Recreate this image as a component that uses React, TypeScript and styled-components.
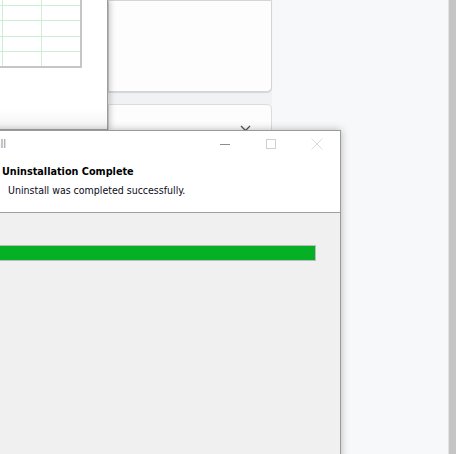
import React from "react";
import styled, { createGlobalStyle } from "styled-components";

const GlobalStyle = createGlobalStyle`
  html, body {
    margin: 0;
    padding: 0;
    overflow: hidden;
    background: #f7f8fa;
  }
`;

// desktop behind the dialog
const Desktop = styled.div`
  position: relative;
  display: grid;
  grid-template-columns: 108px 164px 1fr 8px;
  width: 456px;
  height: 454px;
  overflow: hidden;
  background: #f7f8fa;
  font-family: "DejaVu Sans Condensed", "Liberation Sans", sans-serif;
`;

const SheetWindow = styled.div`
  position: relative;
  z-index: 1;
  height: 130px;
  background: linear-gradient(#ffffff 85%, #f2f2f2);
  border-right: 1px solid #9c9c9c;
  border-bottom: 1px solid #a8a8a8;
  box-sizing: border-box;
  box-shadow: 2px 0 6px rgba(0, 0, 0, 0.22);
`;

const Sheet = styled.div`
  display: grid;
  grid-template-columns: 2px 38px 38px;
  grid-template-rows: 5px 14px 15px 14px 14px;
  gap: 1px;
  width: 79px;
  padding-right: 1px;
  background: #cdeed5;
  border-right: 2px solid #c6c6c6;
  border-bottom: 2px solid #c6c6c6;
`;

const Cell = styled.div`
  background: #ffffff;
`;

const Column = styled.div`
  display: flex;
  flex-direction: column;
  gap: 12px;
  background: #f1f2f4;
`;

const Card = styled.div<{ $h: number }>`
  height: ${(p) => p.$h}px;
  flex-shrink: 0;
  box-sizing: border-box;
  display: flex;
  justify-content: flex-end;
  padding: 20px 20px 0 0;
  background: #fdfdfe;
  border: 1px solid #d4d4d6;
  border-radius: 0 0 5px 0;
  box-shadow: 0 1px 1px rgba(0, 0, 0, 0.12);
`;

const LowerCard = styled(Card)`
  border-radius: 0 5px 0 0;
  box-shadow: none;
  border-color: #dcdcde;
`;

const Scrollbar = styled.div`
  background: #c5c5c5;
  border-left: 1px solid #e2e2e2;
`;

// the uninstaller window
const Dialog = styled.div`
  position: absolute;
  top: 130px;
  left: -20px;
  z-index: 2;
  width: 361px;
  height: 340px;
  box-sizing: border-box;
  display: flex;
  flex-direction: column;
  background: #f0f0f0;
  border: 1px solid #9a9a9a;
  box-shadow: 0 0 8px rgba(0, 0, 0, 0.28);
  font-family: "DejaVu Sans Condensed", "Liberation Sans", sans-serif;
`;

const TitleBar = styled.div`
  display: flex;
  align-items: center;
  height: 25px;
  background: #ffffff;
`;

const TitleText = styled.span`
  margin-left: -21px;
  font-family: Lato, "Liberation Sans", sans-serif;
  font-size: 12px;
  color: #9c9ca6;
`;

const Caption = styled.div`
  display: flex;
  margin-left: auto;
  height: 100%;
`;

const CaptionButton = styled.div`
  width: 46px;
  display: flex;
  align-items: center;
  justify-content: center;
`;

const Header = styled.div`
  display: flex;
  flex-direction: column;
  height: 57px;
  box-sizing: border-box;
  padding: 8px 0 0 21px;
  background: #ffffff;
  border-bottom: 1px solid #a0a0a0;
`;

const HeaderTitle = styled.div`
  font-size: 10.75px;
  font-weight: 700;
  line-height: 15px;
  color: #000000;
`;

const HeaderSub = styled.div`
  margin: 4px 0 0 6px;
  font-size: 10.5px;
  line-height: 15px;
  color: #0a0a20;
`;

const Body = styled.div`
  flex: 1;
  padding: 32px 24px 0 10px;
`;

const Progress = styled.div`
  height: 16px;
  box-sizing: border-box;
  border: 1px solid #bcbcbc;
  background: #e6e6e6;
`;

const ProgressFill = styled.div`
  height: 100%;
  background: #06b025;
`;

export default function App() {
  const cells = Array.from({ length: 15 });
  const progress = 100;
  return (
    <Desktop>
      <GlobalStyle />
      <SheetWindow>
        <Sheet>
          {cells.map((_, i) => (
            <Cell key={i} />
          ))}
        </Sheet>
      </SheetWindow>
      <Column>
        <Card $h={92} />
        <LowerCard $h={400}>
          <svg width="11" height="7" viewBox="0 0 11 7">
            <path d="M1 1l4.5 4.5L10 1" fill="none" stroke="#555" strokeWidth="1.3" />
          </svg>
        </LowerCard>
      </Column>
      <div />
      <Scrollbar />

      <Dialog>
        <TitleBar>
          <TitleText>Uninstall</TitleText>
          <Caption>
            <CaptionButton>
              <svg width="10" height="10" viewBox="0 0 10 10">
                <path d="M0 5.5h10" stroke="#8c8c8c" strokeWidth="1" />
              </svg>
            </CaptionButton>
            <CaptionButton>
              <svg width="10" height="10" viewBox="0 0 10 10">
                <rect x="0.5" y="0.5" width="9" height="9" fill="none" stroke="#cfcfcf" />
              </svg>
            </CaptionButton>
            <CaptionButton>
              <svg width="12" height="12" viewBox="0 0 12 12">
                <path d="M0.5 0.5l11 11M11.5 0.5l-11 11" stroke="#dcdcdc" strokeWidth="1" />
              </svg>
            </CaptionButton>
          </Caption>
        </TitleBar>
        <Header>
          <HeaderTitle>Uninstallation Complete</HeaderTitle>
          <HeaderSub>Uninstall was completed successfully.</HeaderSub>
        </Header>
        <Body>
          <Progress>
            <ProgressFill style={{ width: `${progress}%` }} />
          </Progress>
        </Body>
      </Dialog>
    </Desktop>
  );
}
